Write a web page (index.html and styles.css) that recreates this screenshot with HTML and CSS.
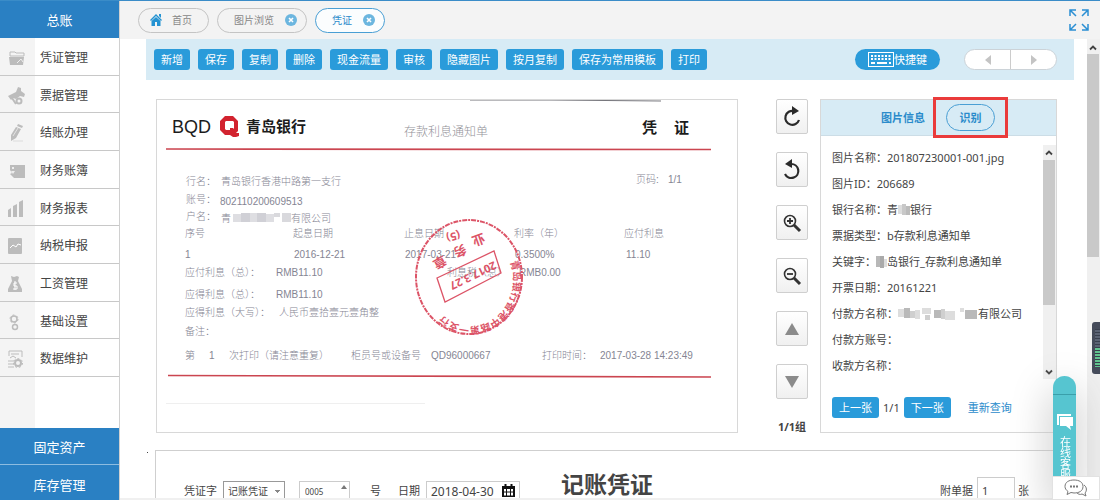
FILE: index.html
```html
<!DOCTYPE html>
<html lang="zh-CN">
<head>
<meta charset="utf-8">
<title>记账凭证</title>
<link rel="stylesheet" href="styles.css">
</head>
<body>
<div class="app">
  <nav class="sidebar">
    <a class="module module-top" href="#">总账</a>
    <ul class="menu">
      <li><a href="#"><span class="menu-icon"><svg viewBox="0 0 18 18"><path d="M2 3h5l1 1h8v3H2z" fill="none" stroke="#bcbcbc"/><path d="M1 8h15l-1 8H2z" fill="#bcbcbc"/><path d="M9 14l4-4 2 3" stroke="#eee" fill="none"/></svg></span>凭证管理</a></li>
      <li><a href="#"><span class="menu-icon"><svg viewBox="0 0 18 18"><path d="M0 9l8-4 2-5 3 1 0 3 4 3-1 3-4-1-4 3-3-1-2 2z" fill="#bcbcbc"/><circle cx="11" cy="14" r="2.500" fill="#f4f4f4" stroke="#bcbcbc" stroke-width="2"/><path d="M4 11l4 6" stroke="#bcbcbc" stroke-width="2"/></svg></span>票据管理</a></li>
      <li><a href="#"><span class="menu-icon"><svg viewBox="0 0 18 18"><path d="M10 0l5 2-1 2-5-2zM8 3l5 2-5 9-5 3 0-6z" fill="#bcbcbc"/><path d="M5 12l5-8" stroke="#e4e4e4"/><path d="M5 17h10" stroke="#dcdcdc"/></svg></span>结账办理</a></li>
      <li><a href="#"><span class="menu-icon"><svg viewBox="0 0 18 18"><path d="M2 3h15v13H6l-4-4 2-1-2-3z" fill="#bcbcbc"/><circle cx="5" cy="6" r="1" fill="#fff"/><path d="M3 9h4l-2 3z" fill="#eee"/></svg></span>财务账簿</a></li>
      <li><a href="#"><span class="menu-icon"><svg viewBox="0 0 18 18"><path d="M0 10l3-2v9H0zM5 6l4-2v13H5zM11 2l4-2v17h-4z" fill="#bcbcbc"/></svg></span>财务报表</a></li>
      <li><a href="#"><span class="menu-icon"><svg viewBox="0 0 18 18"><rect y="1" width="14" height="16" rx="1" fill="#bcbcbc"/><path d="M2 11l3-3 3 2 2-3 3 1" fill="none" stroke="#fff"/></svg></span>纳税申报</a></li>
      <li><a href="#"><span class="menu-icon"><svg viewBox="0 0 18 18"><path d="M3 1l3 1 3-1 2 1-1 4 4 8v3H0v-3l4-8z" fill="#bcbcbc"/><path d="M9 8H6v3h3v3H5M7 6v9" fill="none" stroke="#fff"/></svg></span>工资管理</a></li>
      <li><a href="#"><span class="menu-icon"><svg viewBox="0 0 18 18" fill="none" stroke="#bcbcbc"><circle cx="6" cy="6" r="3" stroke-width="1.500"/><circle cx="6" cy="6" r="4" stroke-dasharray="2 2.200"/><circle cx="7" cy="14" r="2.500" stroke-width="1.500"/></svg></span>基础设置</a></li>
      <li><a href="#"><span class="menu-icon"><svg viewBox="0 0 18 18" fill="none" stroke="#bcbcbc"><path d="M1 6V1h13v6M3 4h8M2 8l3-2 3 2M0 11h6M0 14h6M0 17h6"/><circle cx="10" cy="13" r="3" stroke-width="2"/><circle cx="10" cy="13" r="4.500" stroke-dasharray="2 2"/></svg></span>数据维护</a></li>
    </ul>
    <div class="menu-rest"></div>
    <a class="module" href="#">固定资产</a>
    <a class="module module-last" href="#">库存管理</a>
  </nav>

  <div class="main">
    <header class="tabs">
      <a class="tab" href="#"><svg class="tab-home" viewBox="0 0 12 12"><path d="M6 0l6 6-1 1-5-5-5 5-1-1zM9 0h2v4L9 2z" fill="#2593d2"/><path d="M1.500 7L6 3l4.500 4v5H7V8H5v4H1.500z" fill="#2593d2"/></svg>首页</a>
      <a class="tab" href="#">图片浏览<svg class="tab-close" viewBox="0 0 12 12"><circle cx="6" cy="6" r="6" fill="#6cb6df"/><path d="M4 4l4 4M8 4l-4 4" stroke="#fff" stroke-width="1.600"/></svg></a>
      <a class="tab tab-active" href="#">凭证<svg class="tab-close" viewBox="0 0 12 12"><circle cx="6" cy="6" r="6" fill="#6cb6df"/><path d="M4 4l4 4M8 4l-4 4" stroke="#fff" stroke-width="1.600"/></svg></a>
      <button class="fullscreen" type="button" aria-label="全屏"><svg viewBox="0 0 20 22" fill="none" stroke="#2b8fd3" stroke-width="1.500"><path d="M1 7V1h6M1 1l6 6M13 1h6v6M19 1l-6 6M1 15v6h6M1 21l6-6M13 21h6v-6M19 21l-6-6"/></svg></button>
    </header>

    <div class="body">
      <div class="content">
        <div class="toolbar">
          <button class="btn" type="button">新增</button>
          <button class="btn" type="button">保存</button>
          <button class="btn" type="button">复制</button>
          <button class="btn" type="button">删除</button>
          <button class="btn" type="button">现金流量</button>
          <button class="btn" type="button">审核</button>
          <button class="btn" type="button">隐藏图片</button>
          <button class="btn" type="button">按月复制</button>
          <button class="btn" type="button">保存为常用模板</button>
          <button class="btn" type="button">打印</button>
          <button class="hotkey" type="button"><svg viewBox="0 0 26 15"><rect x=".5" y=".5" width="25" height="14" fill="none" stroke="#fff"/><path d="M3 4h20M3 7h20" stroke="#fff" stroke-width="2" stroke-dasharray="2 1.500"/><path d="M3 11h4M9 11h10M21 11h2" stroke="#fff" stroke-width="2"/></svg>快捷键</button>
          <div class="pager">
            <button type="button" aria-label="上一页"><svg viewBox="0 0 8 10"><path d="M7 0v10L1 5z" fill="#c4c4c4"/></svg></button>
            <button type="button" aria-label="下一页"><svg viewBox="0 0 8 10"><path d="M1 0v10l6-5z" fill="#c4c4c4"/></svg></button>
          </div>
        </div>

        <div class="workspace">
          <div class="scan">
            <svg viewBox="157 100 580 332">
              <defs><path id="rim" d="M510 262A42 45 0 0 1 431 299"/></defs>
              <path d="M470 100h80l111 1" stroke="#76767c" fill="none"/>
              <path d="M166 403.500h259" stroke="#efefef"/>
              <path d="M166 149L711 149.500M168 375.500L711 377" stroke="#cb4550" stroke-width="1.700"/>
              <g class="ink">
                <text class="brand-en" x="172" y="133">BQD</text>
                <text class="brand-cn" x="246" y="132">青岛银行</text>
                <text class="brand-cn" x="642" y="133">凭</text>
                <text class="brand-cn" x="674" y="133">证</text>
              </g>
              <path fill="#d2232f" fill-rule="evenodd" d="M225 116h8l5 5v10l-2 2h3v3l-3 1h-3l-3-2h-5l-5-5v-9zM226 121l-1 1v7l1 1h4v-2h3v1l1-1v-6l-1-1z"/>
              <text class="doc-title" x="404" y="136">存款利息通知单</text>
              <g class="print">
                <text x="636" y="183">页码:</text><text x="668" y="183">1/1</text>
                <text x="186" y="185">行名：</text><text x="221" y="185">青岛银行香港中路第一支行</text>
                <text x="186" y="203">账号：</text><text x="220" y="205">802110200609513</text>
                <text x="186" y="220">户名：</text><text x="221" y="222">青</text><text x="291" y="222">有限公司</text>
                <text x="185" y="237">序号</text><text x="293" y="237">起息日期</text><text x="404" y="237">止息日期</text><text x="514" y="237">利率（年）</text><text x="624" y="237">应付利息</text>
                <text x="185" y="258">1</text><text x="294" y="258">2016-12-21</text><text x="405" y="258">2017-03-21</text><text x="515" y="258">0.3500%</text><text x="626" y="258">11.10</text>
                <text x="185" y="276">应付利息（总）：</text><text x="276" y="276">RMB11.10</text><text x="447" y="276">利息税（总）</text><text x="519" y="276">RMB0.00</text>
                <text x="185" y="298">应得利息（总）：</text><text x="276" y="298">RMB11.10</text>
                <text x="185" y="316">应得利息（大写）：</text><text x="279" y="316">人民币壹拾壹元壹角整</text>
                <text x="185" y="335">备注：</text>
                <text x="185" y="359">第</text><text x="209" y="359">1</text><text x="229" y="359">次打印（请注意重复）</text><text x="351" y="359">柜员号或设备号</text><text x="431" y="359">QD96000667</text><text x="542" y="359">打印时间：</text><text x="600" y="359">2017-03-28 14:23:49</text>
              </g>
              <g>
                <path d="M233 214h8v8h-8zM250 213h7v9h-7zM266 214h8v8h-8z" fill="#dedee2"/>
                <path d="M241 213h9v9h-9zM257 213h9v9h-9z" fill="#d0d0d6"/>
                <path d="M274 213h6v4h-6zM282 213h9v9h-9z" fill="#d9d9dd"/>
              </g>
              <g class="stamp">
                <ellipse cx="469" cy="277" rx="53" ry="57" fill="none" stroke="#dc5467" stroke-width="2" stroke-dasharray="5 1 2 1"/>
                <path d="M437 278L494 251L501 273L445 302Z" fill="none" stroke="#dc5467" stroke-width="1.300"/>
                <text class="stamp-rim"><textPath href="#rim">青岛银行香港中路第一支行</textPath></text>
                <text class="stamp-word" transform="translate(483 233) rotate(160)">业</text>
                <text class="stamp-word" transform="translate(464 244) rotate(155)">务</text>
                <text class="stamp-word" transform="translate(443 255) rotate(150)">章</text>
                <text class="stamp-date" transform="translate(459 231) rotate(165)">(5)</text>
                <text class="stamp-date" transform="translate(494 261) rotate(154)">2017.3.27</text>
              </g>
            </svg>
          </div>

          <div class="scan-tools">
            <button type="button" aria-label="顺时针旋转"><svg viewBox="0 0 20 22"><path d="M12 5a7 7 0 1 0 5 9" fill="none" stroke="#2a2a2a" stroke-width="2.200"/><path d="M10 0l7 5-7 4z" fill="#2a2a2a"/></svg></button>
            <button type="button" aria-label="逆时针旋转"><svg viewBox="0 0 20 22"><path d="M9 5a7 7 0 1 1-6 10" fill="none" stroke="#2a2a2a" stroke-width="2.200"/><path d="M10 0L3 5l7 4z" fill="#2a2a2a"/></svg></button>
            <button type="button" aria-label="放大"><svg viewBox="0 0 20 22" fill="none" stroke="#333"><circle cx="8" cy="9" r="5.500" stroke-width="1.600"/><path d="M8 6v6M5 9h6" stroke-width="1.800"/><path d="M12 13l6 6" stroke-width="3"/></svg></button>
            <button type="button" aria-label="缩小"><svg viewBox="0 0 20 22" fill="none" stroke="#333"><circle cx="8" cy="9" r="5.500" stroke-width="1.600"/><path d="M5 9h6" stroke-width="1.800"/><path d="M12 13l6 6" stroke-width="3"/></svg></button>
            <button type="button" aria-label="上一组"><svg viewBox="0 0 20 22"><path d="M10 5l7 12H3z" fill="#8b8b8b"/></svg></button>
            <button type="button" aria-label="下一组"><svg viewBox="0 0 20 22"><path d="M10 17l7-12H3z" fill="#8b8b8b"/></svg></button>
            <span class="group-count">1/1组</span>
          </div>

          <aside class="info">
            <div class="info-head">
              <span class="info-title">图片信息</span>
              <span class="marked"><button class="recognize" type="button">识别</button></span>
            </div>
            <div class="info-scroll">
              <dl class="fields">
                <div><dt>图片名称：</dt><dd>201807230001-001.jpg</dd></div>
                <div><dt>图片ID：</dt><dd>206689</dd></div>
                <div><dt>银行名称：</dt><dd>青<svg class="mask" width="12" height="12" viewBox="0 0 12 12"><path d="M0 1h4v9H0z" fill="#ddd"/><path d="M4 0h4v11H4z" fill="#c8c8c8"/><path d="M8 2h4v9H8z" fill="#bbb"/></svg>银行</dd></div>
                <div><dt>票据类型：</dt><dd>b存款利息通知单</dd></div>
                <div><dt>关键字：</dt><dd><svg class="mask" width="11" height="12" viewBox="0 0 11 12"><path d="M0 0h4v11H0z" fill="#b8b8b8"/><path d="M4 0h4v12H4z" fill="#aaa"/><path d="M8 3h3v8H8z" fill="#ddd"/></svg>岛银行_存款利息通知单</dd></div>
                <div><dt>开票日期：</dt><dd>20161221</dd></div>
                <div><dt>付款方名称：</dt><dd><svg class="mask" width="80" height="14" viewBox="0 0 80 14"><path d="M0 2h6v8H0zM17 3h5v9h-5zM24 1h9v6h-9zM47 4h10v9H47zM62 1h4v4h-4z" fill="#ddd"/><path d="M6 1h6v10H6zM36 3h7v8h-7zM67 3h12v9H67z" fill="#b9b9b9"/><path d="M12 4h5v7h-5zM27 8h5v5h-5zM43 2h4v10h-4z" fill="#cfcfcf"/></svg>有限公司</dd></div>
                <div><dt>付款方账号：</dt><dd></dd></div>
                <div><dt>收款方名称：</dt><dd></dd></div>
              </dl>
              <div class="bar bar-info">
                <svg class="bar-arrow" viewBox="0 0 12 14"><path d="M3 9l3-3 3 3" fill="none" stroke="#444" stroke-width="1.800"/></svg>
                <span class="thumb"></span>
                <svg class="bar-arrow" viewBox="0 0 12 14"><path d="M3 6l3 3 3-3" fill="none" stroke="#444" stroke-width="1.800"/></svg>
              </div>
            </div>
            <div class="info-foot">
              <button class="btn" type="button">上一张</button>
              <span>1/1</span>
              <button class="btn" type="button">下一张</button>
              <a class="requery" href="#">重新查询</a>
            </div>
          </aside>
        </div>

        <form class="voucher">
          <label for="word">凭证字</label>
          <select id="word" class="word"><option>记账凭证</option></select>
          <span class="number"><input id="number" value="0005" aria-label="凭证号"><svg viewBox="0 0 6 4"><path d="M3 0l3 4H0z" fill="#777"/></svg></span>
          <label class="number-label" for="number">号</label>
          <label for="date">日期</label>
          <span class="date"><input id="date" value="2018-04-30"><svg viewBox="0 0 13 13"><path d="M0 2h13v11H0z" fill="#111"/><path d="M2 5h9v6.500H2z" fill="#fff"/><path d="M2 8h9M4.500 5v7M8.500 5v7" stroke="#111"/><path d="M3.500 0v4M9.500 0v4" stroke="#111" stroke-width="2"/></svg></span>
          <h1>记账凭证</h1>
          <label class="attach-label" for="attach">附单据</label>
          <input id="attach" class="attach" value="1">
          <span>张</span>
        </form>
      </div>
      <div class="bar bar-page">
        <svg class="bar-arrow" viewBox="0 0 12 14"><path d="M3 10l3-3 3 3" fill="none" stroke="#444" stroke-width="1.800"/></svg>
        <span class="thumb"></span>
      </div>
    </div>
  </div>
</div>

<div class="service">
  <span class="service-cap"></span>
  <svg viewBox="0 0 16 16"><path d="M0 0h14v2H2v9H0z" fill="#fff"/><path d="M3 3h13v9h-3l1 4-5-4H3z" fill="#fff"/></svg>
  <a href="#">在线客服</a>
</div>
<button class="chat" type="button" aria-label="聊天"><svg viewBox="0 0 24 18" fill="none" stroke="#777"><path d="M10 1c5 0 9 2 9 6.500S15 14 10 14l-3-.500-4 2 1-3C2 11 1 9.500 1 7.500 1 3 5 1 10 1z"/><path d="M20 6c3 2 3 6 1 8l1 3-4-2c-2 1-4 0-5-1" /><path d="M6 7.500h2M9 7.500h2M12 7.500h2" stroke-width="2"/></svg></button>
<div class="meter"></div>
</body>
</html>
```

FILE: styles.css
```css
* { box-sizing: border-box; }

body {
  margin: 0;
  background: #fff;
  color: #444;
  font-family: "Noto Sans", "Noto Sans CJK SC", sans-serif;
  font-size: 11px;
  line-height: 16px;
}

button, input, select { font: inherit; color: inherit; margin: 0; }
button { border: 0; padding: 0; background: none; cursor: pointer; }
a { color: inherit; text-decoration: none; }
svg { display: block; flex: none; }

.app {
  display: flex;
  height: 100vh;
  overflow: hidden;
  border-top: 1px solid #3a8cc8;
}

/* Left navigation */
.sidebar {
  display: flex;
  flex-direction: column;
  flex: none;
  width: 120px;
  border-right: 1px solid #d0d0d0;
}

.module {
  display: flex;
  align-items: center;
  justify-content: center;
  flex: none;
  height: 37px;
  padding-top: 1px;
  background: #2a80c3;
  color: #fff;
  font-size: 13px;
}
.module:not(.module-top) { padding-top: 2px; border-bottom: 1px solid #8dbce0; }
.module.module-last { height: 35px; padding-top: 4px; border-bottom: 0; }

.menu {
  display: flex;
  flex-direction: column;
  flex: 1;
  margin: 0;
  padding: 0;
  list-style: none;
}
.menu li, .menu-rest { background: linear-gradient(90deg, #f4f4f4 35px, #fff 35px); }
.menu li { flex: 1; display: flex; border-bottom: 1px solid #c8c8c8; }
.menu a { display: flex; align-items: center; flex: 1; gap: 5px; padding-top: 3px; font-size: 12px; }
.menu-icon { width: 35px; padding-left: 8px; }
.menu-icon svg { width: 18px; height: 18px; }
.menu-rest { flex: none; height: 51px; }

/* Page tabs */
.main { display: flex; flex-direction: column; flex: 1; min-width: 0; }

.tabs {
  display: flex;
  align-items: center;
  gap: 8px;
  height: 38px;
  padding: 0 11px 0 18px;
  background: #f3f3f3;
}
.tab {
  display: flex;
  align-items: center;
  gap: 11px;
  height: 25px;
  padding: 0 9px 0 16px;
  border: 1px solid #c4c4c4;
  border-radius: 13px;
  color: #888;
  font-size: 10px;
}
.tab:first-child { padding: 0 16px 0 11px; gap: 10px; }
.tab-active { border-color: #4a9fd4; color: #2b8bcb; background: #fbfdfe; }
.tab-home, .tab-close { width: 12px; height: 12px; }
.fullscreen { margin-left: auto; }
.fullscreen svg { width: 20px; height: 22px; }

.body { display: flex; flex: 1; min-height: 0; border-bottom: 2px solid #f0f0f0; }
.content {
  flex: 1;
  min-width: 0;
  margin: 0 13px 0 26px;
  overflow: hidden;
}

/* Action bar */
.toolbar {
  display: flex;
  align-items: center;
  gap: 8px;
  height: 41px;
  padding: 0 17px 0 8px;
  background: #d7ebf5;
}
.btn {
  height: 21px;
  padding: 0 7px;
  border-radius: 3px;
  background: #2a9bda;
  color: #fff;
  white-space: nowrap;
}
.hotkey {
  display: flex;
  align-items: center;
  height: 21px;
  margin-left: auto;
  padding: 0 13px;
  border-radius: 11px;
  background: #2a9bda;
  color: #fff;
}
.hotkey svg { width: 26px; height: 15px; }
.pager {
  display: flex;
  width: 93px;
  height: 21px;
  margin-left: 16px;
  border: 1px solid #ccd3d8;
  border-radius: 11px;
  background: #fff;
}
.pager button { display: grid; place-items: center; flex: 1; }
.pager button + button { border-left: 1px solid #ccc; }
.pager svg { width: 8px; height: 10px; }

/* Scan, its tools and its data */
.workspace { display: flex; margin: 19px 17px 0 10px; }

.scan { flex: 1; min-width: 0; border: 1px solid #d8d8d8; }
.scan svg { width: 100%; }
.print { fill: #858593; font-family: "Liberation Sans", "Noto Sans CJK SC", sans-serif; font-size: 10px; font-weight: 300; }
.ink { fill: #1c1c1c; }
.brand-en { font-family: "Liberation Sans", sans-serif; font-size: 18px; }
.brand-cn { font-size: 15px; font-weight: 700; }
.doc-title { fill: #929298; font-size: 12px; font-weight: 300; }
.stamp { fill: #dc5467; font-weight: 700; }
.stamp-rim { font-size: 10px; }
.stamp-word { font-size: 13px; }
.stamp-date { font-size: 11px; }

.scan-tools {
  display: flex;
  flex-direction: column;
  align-items: center;
  gap: 18px;
  margin: 0 12px 0 38px;
}
.scan-tools button {
  display: grid;
  place-items: center;
  width: 32px;
  height: 35px;
  border: 1px solid #cfcfcf;
  border-radius: 2px;
  background: linear-gradient(#fff, #f0f0f0);
}
.scan-tools svg { width: 20px; height: 22px; }
.group-count { margin: auto 0 -2px; font-weight: 700; white-space: nowrap; }

.info {
  display: flex;
  flex-direction: column;
  width: 237px;
  border: 1px solid #d8d8d8;
}
.info-head {
  display: flex;
  align-items: center;
  gap: 8px;
  height: 36px;
  padding-left: 60px;
  border-bottom: 1px solid #ccdde6;
  background: #d7ebf5;
  color: #2b8bcb;
  font-weight: 700;
}
.marked { padding: 4px 10px; border: 3px solid #ea3b3b; }
.recognize {
  display: block;
  width: 49px;
  height: 27px;
  border: 1px solid #4a9fd4;
  border-radius: 14px;
}
.info-scroll { display: flex; margin-top: 9px; }
.fields { flex: 1; margin: 0; padding-left: 11px; line-height: 26px; white-space: nowrap; }
.fields div { display: flex; height: 26px; }
.fields dd { display: flex; align-items: center; margin: 0; }
.info-foot { display: flex; align-items: center; gap: 4px; margin-top: 18px; padding-left: 11px; }
.info-foot .btn { width: 47px; }
.requery { margin-left: 13px; color: #2b8bcb; }

/* Scrollbars */
.bar { display: flex; flex-direction: column; flex: none; width: 13px; background: #f0f0f0; }
.bar-arrow { width: 12px; height: 15px; }
.thumb { width: 12px; background: #c9c9c9; }
.bar-info .thumb { flex: 1; margin-bottom: 59px; }
.bar-page .thumb { height: 203px; }

/* Voucher form */
.voucher {
  position: relative;
  display: flex;
  align-items: flex-end;
  margin: 17px 17px 0 9px;
  padding: 0 27px 0 28px;
  height: 48px;
  border: solid #cfcfcf;
  border-width: 1px 1px 0 1px;
  line-height: 14px;
}
.voucher::before {
  content: "";
  position: absolute;
  top: 1px;
  left: -9px;
  width: 1px;
  height: 1px;
  background: #444;
}
.voucher input, .word {
  display: block;
  height: 17px;
  border: 1px solid #ccc;
  border-bottom: 0;
  border-radius: 0;
  background: #fff;
}
.word {
  appearance: none;
  width: 62px;
  margin: 0 14px 0 6px;
  padding: 2px 4px 0;
  border-color: #999;
  background: linear-gradient(#888, #888) 51px 8px / 5px 1px no-repeat,
    linear-gradient(#888, #888) 52px 9px / 3px 1px no-repeat,
    linear-gradient(#888, #888) 53px 10px / 1px 1px no-repeat, #fff;
  font-size: 10px;
  line-height: 14px;
}
.number, .date { position: relative; }
.number input { width: 51px; padding: 2px 5px 0; font-size: 8px; }
.number svg { position: absolute; top: 4px; right: 3px; width: 6px; height: 4px; }
.number-label { margin: 0 17px 0 20px; }
.date { margin-left: 6px; }
.voucher .date input { width: 94px; padding: 2px 4px 0; font-size: 12px; }
.date svg { position: absolute; top: 3px; right: 5px; width: 13px; height: 13px; }
.voucher h1 { margin: 0 0 0 41px; font-size: 23px; line-height: 28px; white-space: nowrap; }
.attach-label { margin-left: auto; }
.voucher .attach { width: 38px; height: 21px; margin: 0 3px 0 4px; padding: 5px 4px 0; }
.voucher label, .voucher span:last-child { white-space: nowrap; }

/* Floating helpers */
.service {
  position: fixed;
  right: 24px;
  bottom: 0;
  display: flex;
  flex-direction: column;
  align-items: center;
  width: 23px;
  height: 124px;
  border-radius: 12px 12px 0 0;
  background: #56c5d0;
  box-shadow: 0 12px 40px #bbb;
  color: #fff;
  overflow: hidden;
}
.service-cap { align-self: stretch; height: 19px; margin-bottom: 19px; border-bottom: 1px solid #3a9faa; }
.service svg { width: 16px; height: 16px; margin-bottom: 6px; }
.service a { writing-mode: vertical-rl; }
.chat {
  position: fixed;
  right: 0;
  bottom: 0;
  display: grid;
  place-items: center;
  width: 48px;
  height: 24px;
  border: 1px solid #e2e2e2;
  background: #fff;
}
.chat svg { width: 24px; height: 18px; }
.meter {
  position: fixed;
  right: 0;
  top: 322px;
  width: 8px;
  height: 52px;
  padding: 7px 0 7px 3px;
  border-radius: 3px 0 0 3px;
  background: repeating-linear-gradient(#39404e 0 1px, transparent 1px 3px) content-box,
    linear-gradient(#5b6374 50%, #62c490 50%) content-box, #454b5a;
}
```
